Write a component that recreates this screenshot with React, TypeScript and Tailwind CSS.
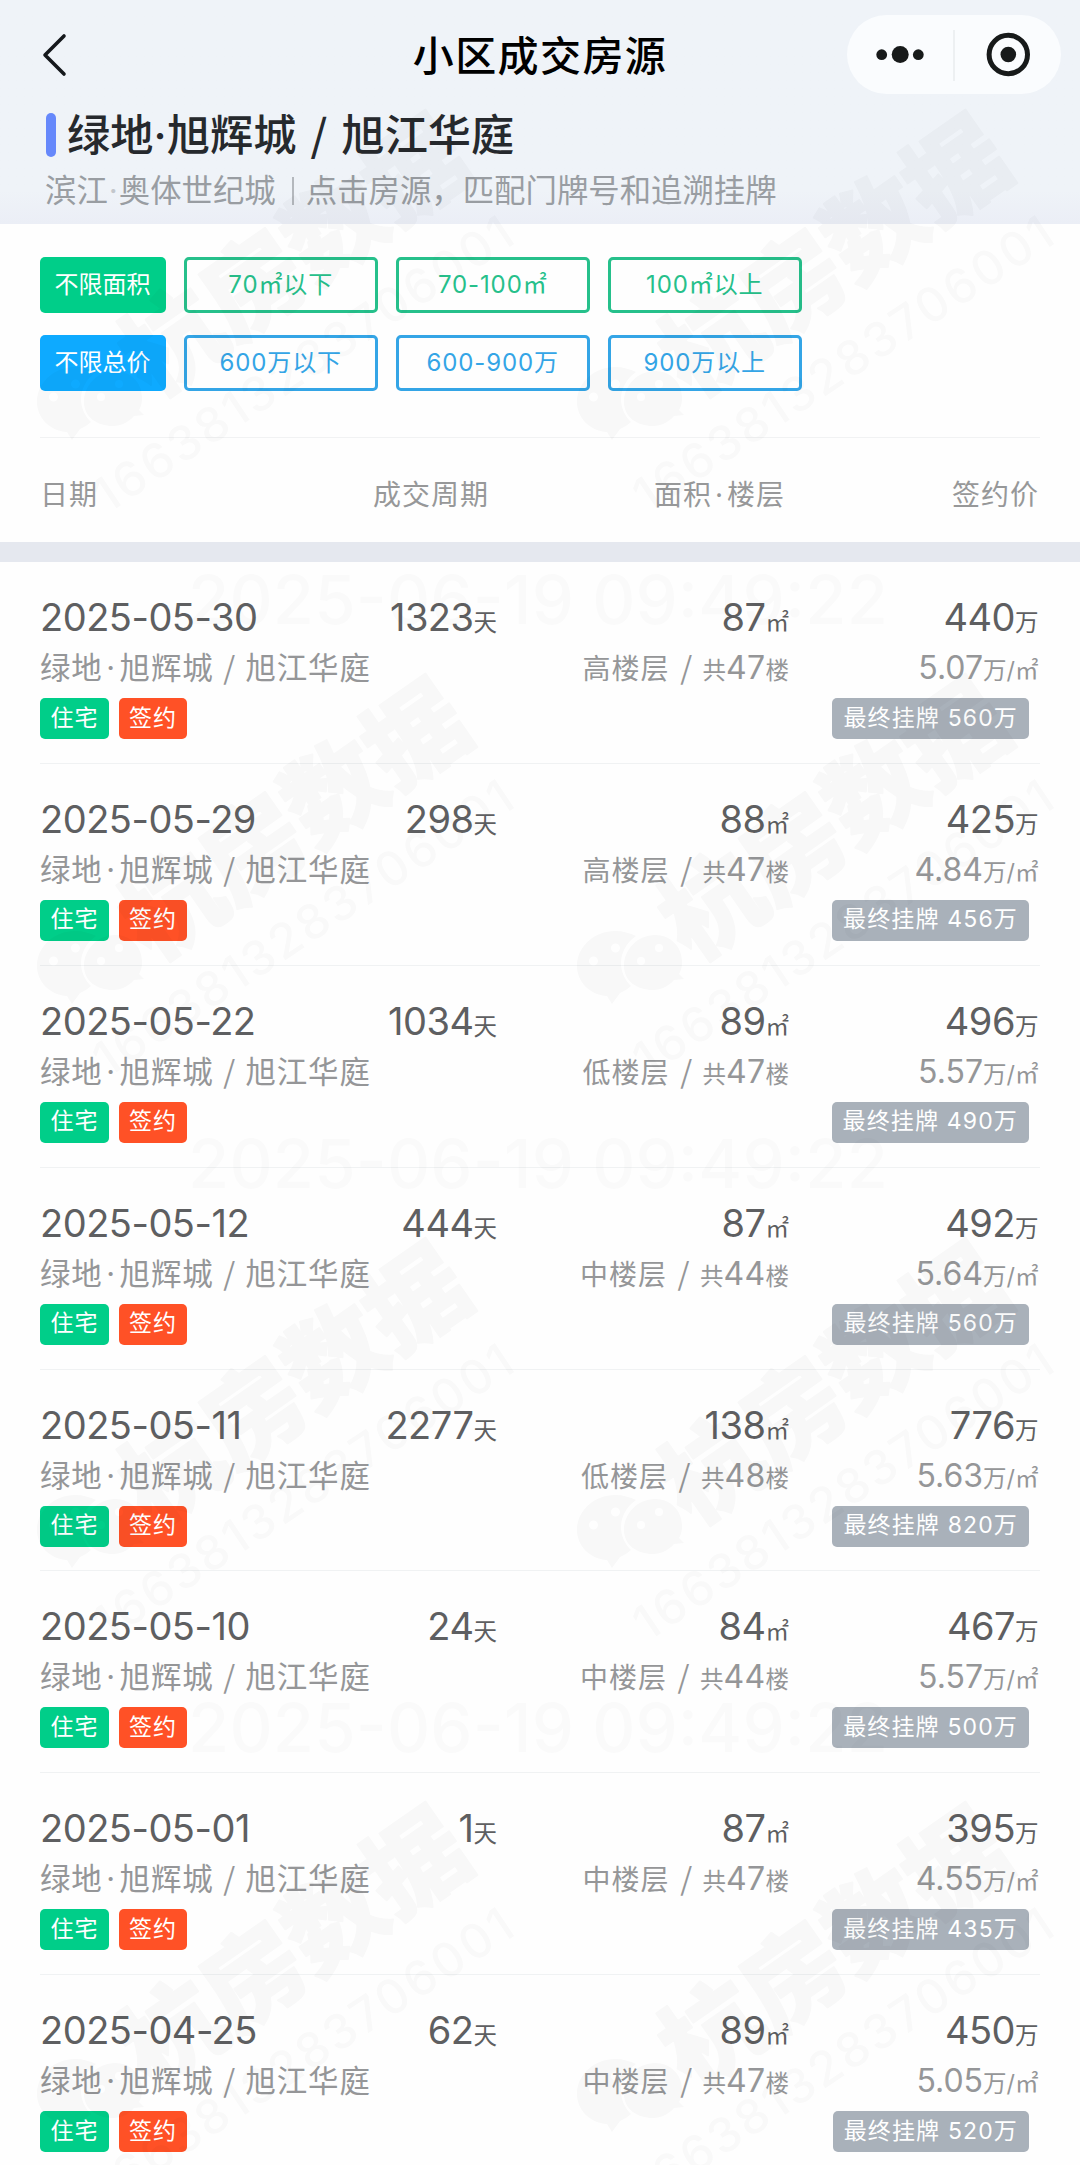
import { clsx } from 'clsx';

type Deal = {
  date: string;
  days: string;
  area: string;
  floor: string;
  total: string;
  price: string;
  unit: string;
  listed: string;
};

const deals: Deal[] = [
  { date: '2025-05-30', days: '1323', area: '87', floor: '高楼层', total: '47', price: '440', unit: '5.07', listed: '560' },
  { date: '2025-05-29', days: '298', area: '88', floor: '高楼层', total: '47', price: '425', unit: '4.84', listed: '456' },
  { date: '2025-05-22', days: '1034', area: '89', floor: '低楼层', total: '47', price: '496', unit: '5.57', listed: '490' },
  { date: '2025-05-12', days: '444', area: '87', floor: '中楼层', total: '44', price: '492', unit: '5.64', listed: '560' },
  { date: '2025-05-11', days: '2277', area: '138', floor: '低楼层', total: '48', price: '776', unit: '5.63', listed: '820' },
  { date: '2025-05-10', days: '24', area: '84', floor: '中楼层', total: '44', price: '467', unit: '5.57', listed: '500' },
  { date: '2025-05-01', days: '1', area: '87', floor: '中楼层', total: '47', price: '395', unit: '4.55', listed: '435' },
  { date: '2025-04-25', days: '62', area: '89', floor: '中楼层', total: '47', price: '450', unit: '5.05', listed: '520' },
];

const areaFilters = ['不限面积', '70㎡以下', '70-100㎡', '100㎡以上'];
const priceFilters = ['不限总价', '600万以下', '600-900万', '900万以上'];

function Slash({ className }: { className: string }) {
  return (
    <i className={clsx("inline-block text-center font-['Noto_Sans_CJK_SC',sans-serif] leading-none not-italic", className)}>/</i>
  );
}

function NavBar() {
  return (
    <div className="relative flex h-[110px] items-center justify-center pt-[3px]">
      <svg className="absolute left-[40px] top-[32px]" width="28" height="46" viewBox="0 0 28 46" fill="none">
        <path d="M24 4 5 23l19 19" stroke="#15181c" strokeWidth="3.6" strokeLinecap="round" strokeLinejoin="round" />
      </svg>
      <h1 className="text-[41px] font-medium leading-none tracking-[1.4px] text-black">小区成交房源</h1>
      <div className="absolute left-[847px] top-[15px] flex h-[79px] w-[214px] rounded-full bg-[#fafcfe]">
        <svg width="214" height="79" viewBox="0 0 214 79">
          <g fill="#171a1a">
            <circle cx="34.7" cy="39.7" r="5.4" />
            <circle cx="53.2" cy="39.5" r="8.5" />
            <circle cx="71.3" cy="39.7" r="5.4" />
            <circle cx="161.3" cy="39.5" r="7.8" />
          </g>
          <path d="M107 15v51" stroke="#e9ecee" strokeWidth="1.5" />
          <circle cx="161.3" cy="39.5" r="19.2" fill="none" stroke="#171a1a" strokeWidth="5" />
        </svg>
      </div>
    </div>
  );
}

function FilterRow({ items, color }: { items: string[]; color: 'green' | 'blue' }) {
  return (
    <div className="flex gap-[17.5px] text-[24px] leading-none">
      {items.map((item, i) => (
        <button
          key={item}
          className={clsx(
            'flex h-[55.5px] items-center justify-center rounded-[5px]',
            i === 0 ? 'w-[126px] pr-px text-white' : 'w-[194.5px] border-[3px] tracking-[0.9px]',
            color === 'green' && (i === 0 ? 'bg-[#00ce89]' : 'border-[#26c08b] text-[#26c08b]'),
            color === 'blue' && (i === 0 ? 'bg-[#0eaaff]' : 'border-[#34a5e6] text-[#34a5e6]'),
          )}
        >
          {item}
        </button>
      ))}
    </div>
  );
}

function DealRow({ deal }: { deal: Deal }) {
  return (
    <li className="mx-10 h-[201.9px] border-b-[1.5px] border-[#f0f2f3] pt-[33px]">
      <div className="flex h-[44px] items-baseline text-[38px] leading-[44px] tracking-[-0.5px] text-[#5e5f61]">
        <span className="w-[300px]">{deal.date}</span>
        <span className="w-[157px] text-right">
          {deal.days}
          <small className="text-[23.5px] tracking-normal">天</small>
        </span>
        <span className="w-[292px] text-right">
          {deal.area}
          <small className="text-[23.5px] tracking-normal">㎡</small>
        </span>
        <span className="w-[249.500px] text-right">
          {deal.price}
          <small className="text-[23.5px] tracking-normal">万</small>
        </span>
      </div>
      <div className="mt-[7px] flex h-[44px] items-baseline text-[30.5px] leading-[44px] text-[#959698]">
        <span className="w-[449px] tracking-[0.8px]">
          绿地<i className="inline-block w-[17px] text-center not-italic">·</i>旭辉城
          <Slash className="w-[32px]" />
          旭江华庭
        </span>
        <span className="w-[300px] text-right">
          <span className="text-[28px] tracking-[1px]">{deal.floor}</span>
          <Slash className="w-[33px]" />
          <small className="text-[23.5px]">共</small>
          <span className="text-[32px] tracking-[0.3px]">{deal.total}</span>
          <small className="text-[23.5px]">楼</small>
        </span>
        <span className="w-[249.500px] text-right">
          <span className="text-[32px]">{deal.unit}</span>
          <small className="text-[23.5px]">万/㎡</small>
        </span>
      </div>
      <div className="mt-2 flex gap-2.5 text-[23px] leading-none tracking-[1px] text-white">
        <span className="flex h-[41px] w-[69px] items-center justify-center rounded-[5px] bg-[#00ce89] pb-px">住宅</span>
        <span className="flex h-[41px] w-[68px] items-center justify-center rounded-[5px] bg-[#ff5126] pb-px">签约</span>
        <span className="ml-auto mr-[11px] flex h-[41px] items-center rounded-[5px] bg-[#a9b1ba] px-[11px] pb-px tracking-[1.15px]">
          最终挂牌 {deal.listed}万
        </span>
      </div>
    </li>
  );
}

function Stamp() {
  return (
    <g>
      <g transform="translate(295 258) rotate(-35)">
        <text textAnchor="middle" y="34" fontSize="99" fontWeight="900" stroke="#000" strokeWidth="2" strokeLinejoin="round">
          杭房数据
        </text>
      </g>
      <g transform="translate(303 364) rotate(-33.6)">
        <text x="-246" y="17" fontSize="48" fontWeight="500" textLength="492" opacity="0.85">
          1663813283706001
        </text>
      </g>
      {/* two overlapping chat bubbles */}
      <path
        fillRule="evenodd"
        d="M37 402c0-20 18-35 38-35 8 0 15 2 21 5-10 7-15 17-15 27 0 9 4 17 10 23-3 3-7 5-11 7l-8 11-5-8c-17-1-30-14-30-30zM49 397a4.500 4.500 0 1 0 9 0a4.500 4.500 0 1 0-9 0zM71 384a4.500 4.500 0 1 0 9 0a4.500 4.500 0 1 0-9 0z"
      />
      <path
        fillRule="evenodd"
        d="M84 402c0-17 14-31 31-31 16 0 27 12 27 27 0 5-1 9-3 12l5 5-10 1c-5 6-13 10-21 10-16 0-29-9-29-24zM97 397a4 4 0 1 0 8 0a4 4 0 1 0-8 0zM115 384a4 4 0 1 0 8 0a4 4 0 1 0-8 0z"
      />
    </g>
  );
}

function Watermark() {
  return (
    <svg className="pointer-events-none absolute inset-0" width="1080" height="2165" viewBox="0 0 1080 2165">
      <g fill="#000" opacity="0.026">
        {[0, 564, 1128, 1692].map((y) =>
          [0, 540].map((x) => (
            <g key={`${x}-${y}`} transform={`translate(${x} ${y})`}>
              <Stamp />
            </g>
          )),
        )}
        {[624, 1188, 1752].map((y) => (
          <text key={y} x="188" y={y} fontSize="67" fontWeight="500" textLength="700" opacity="0.65">
            2025-06-19 09:49:22
          </text>
        ))}
      </g>
    </svg>
  );
}

export default function App() {
  return (
    <div className="relative h-[2165px] w-[1080px] overflow-hidden bg-[#fefefe] font-[Inter,'Noto_Sans_CJK_SC',sans-serif]">
      <header className="h-56 bg-linear-to-b from-[#eff3f8] from-85% to-[#ebeef6]">
        <NavBar />
        <div className="flex items-center pl-[46px] pt-[3px]">
          <span className="h-11 w-2.5 rounded-full bg-[#6688fb]" />
          <h2 className="-mt-1 ml-[11px] h-[44px] text-[43.2px] font-medium leading-[44px] text-[#26292d]">
            绿地<i className="inline-block w-[13.5px] text-center not-italic">·</i>旭辉城
            <Slash className="w-[45px]" />
            旭江华庭
          </h2>
        </div>
        <p className="flex items-center pl-[45px] pt-[12px] text-[31.4px] leading-[44px] text-[#999da2]">
          滨江<i className="inline-block w-[11px] text-center not-italic opacity-50">·</i>奥体世纪城
          <span className="ml-[16px] mr-[12px] h-[28px] w-[2px] bg-[#b4b8bd]" />
          点击房源，匹配门牌号和追溯挂牌
        </p>
      </header>

      <section className="px-10 pt-[33px]">
        <div className="flex flex-col gap-[22.5px]">
          <FilterRow items={areaFilters} color="green" />
          <FilterRow items={priceFilters} color="blue" />
        </div>
        <div className="mt-[46.500px] flex h-[105px] border-t-[1.5px] border-[#f1f2f3] pt-[35px] text-[28px] leading-[44px] tracking-[1px] text-[#979899]">
          <span className="w-[300px]">日期</span>
          <span className="w-[149px] text-right">成交周期</span>
          <span className="w-[296px] text-right">
            面积<i className="inline-block w-[15px] text-center not-italic">·</i>楼层
          </span>
          <span className="w-[254px] text-right">签约价</span>
        </div>
      </section>
      <div className="h-5 bg-[#e5e8ef]" />

      <ul>
        {deals.map((deal) => (
          <DealRow key={deal.date} deal={deal} />
        ))}
      </ul>

      <Watermark />
    </div>
  );
}
